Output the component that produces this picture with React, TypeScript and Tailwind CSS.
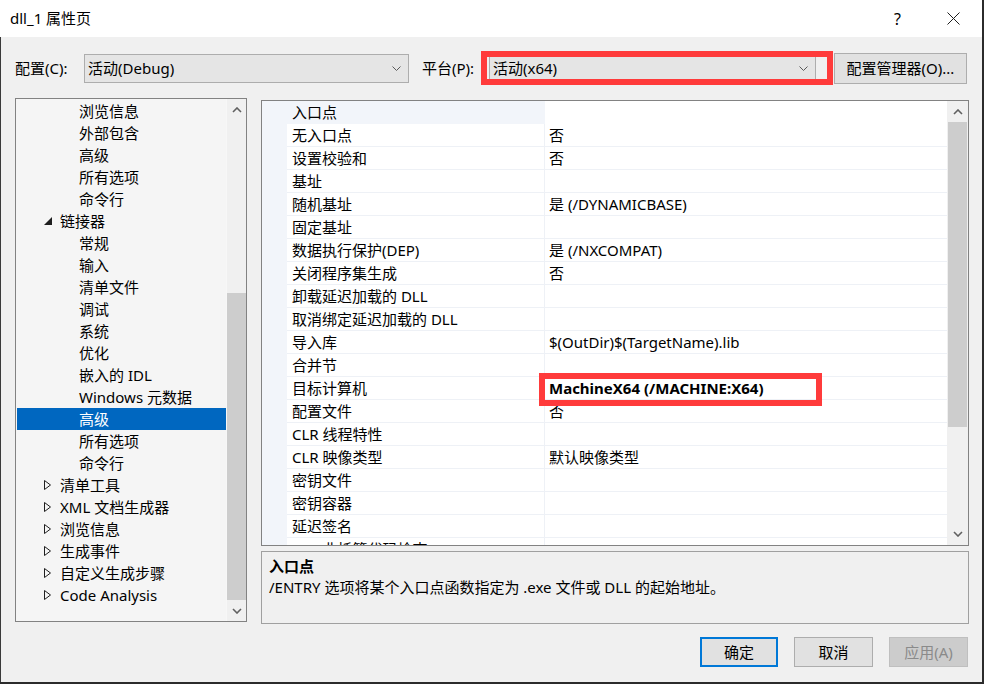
import React from 'react';

interface TreeItem {
  label: string;
  parent?: boolean;
  open?: boolean;
  selected?: boolean;
}

const treeItems: TreeItem[] = [
  { label: '浏览信息' },
  { label: '外部包含' },
  { label: '高级' },
  { label: '所有选项' },
  { label: '命令行' },
  { label: '链接器', parent: true, open: true },
  { label: '常规' },
  { label: '输入' },
  { label: '清单文件' },
  { label: '调试' },
  { label: '系统' },
  { label: '优化' },
  { label: '嵌入的 IDL' },
  { label: 'Windows 元数据' },
  { label: '高级', selected: true },
  { label: '所有选项' },
  { label: '命令行' },
  { label: '清单工具', parent: true },
  { label: 'XML 文档生成器', parent: true },
  { label: '浏览信息', parent: true },
  { label: '生成事件', parent: true },
  { label: '自定义生成步骤', parent: true },
  { label: 'Code Analysis', parent: true },
];

const properties: [string, string][] = [
  ['无入口点', '否'],
  ['设置校验和', '否'],
  ['基址', ''],
  ['随机基址', '是 (/DYNAMICBASE)'],
  ['固定基址', ''],
  ['数据执行保护(DEP)', '是 (/NXCOMPAT)'],
  ['关闭程序集生成', '否'],
  ['卸载延迟加载的 DLL', ''],
  ['取消绑定延迟加载的 DLL', ''],
  ['导入库', '$(OutDir)$(TargetName).lib'],
  ['合并节', ''],
  ['目标计算机', 'MachineX64 (/MACHINE:X64)'],
  ['配置文件', '否'],
  ['CLR 线程特性', ''],
  ['CLR 映像类型', '默认映像类型'],
  ['密钥文件', ''],
  ['密钥容器', ''],
  ['延迟签名', ''],
  ['CLR 非托管代码检查', ''],
];

const SelectChevron = () => (
  <svg width="9" height="5" viewBox="0 0 9 5" fill="none">
    <polyline points="0.5,0.5 4.5,4.5 8.5,0.5" stroke="#5a5a5a" strokeWidth="1" />
  </svg>
);

const ScrollArrow = ({ down }: { down?: boolean }) => (
  <svg width="10" height="6" viewBox="0 0 10 6" fill="none">
    <polyline
      points={down ? '1,1 5,5 9,1' : '1,5 5,1 9,5'}
      stroke="#606060"
      strokeWidth="1.6"
    />
  </svg>
);

const Expander = ({ open }: { open?: boolean }) =>
  open ? (
    <svg width="8" height="8" viewBox="0 0 8 8">
      <polygon points="8,0 8,8 0,8" fill="#1e1e1e" />
    </svg>
  ) : (
    <svg width="7" height="10" viewBox="0 0 7 10" fill="none">
      <polygon points="0.5,0.5 6.5,5 0.5,9.5" stroke="#1e1e1e" strokeWidth="1" />
    </svg>
  );

const Tree = () => (
  <div className="w-[232px] h-[524px] border border-[#828282] bg-[#f5f5f5] flex">
    <div className="flex-1 pt-[1px] pl-[1px] overflow-hidden">
      {treeItems.map((item, i) => (
        <div
          key={i}
          className={
            item.selected
              ? 'h-[22px] flex items-center bg-[#0067c0] text-white'
              : 'h-[22px] flex items-center text-black'
          }
        >
          {item.parent ? (
            <div className="flex items-center pl-[27px]">
              <div className="w-[16px] flex items-center">
                <Expander open={item.open} />
              </div>
              <span>{item.label}</span>
            </div>
          ) : (
            <span className="pl-[62px]">{item.label}</span>
          )}
        </div>
      ))}
    </div>
    <div className="w-[20px] bg-[#f0f0f0] border-l border-[#f7f7f7] flex flex-col">
      <div className="h-[22px] flex items-center justify-center">
        <ScrollArrow />
      </div>
      <div className="flex-1 flex flex-col">
        <div className="h-[172px]" />
        <div className="flex-1 bg-[#cdcdcd]" />
      </div>
      <div className="h-[21px] flex items-center justify-center">
        <ScrollArrow down />
      </div>
    </div>
  </div>
);

const Grid = () => (
  <div className="h-[446px] border border-[#828282] bg-white flex">
    <div className="flex-1 overflow-hidden">
      <div className="h-[23px] flex bg-[#f2f5fa]">
        <div className="w-[25px]" />
        <div className="w-[258px] flex items-center pl-[5px]">入口点</div>
        <div className="flex-1 bg-white" />
      </div>
      {properties.map(([name, value], i) => (
        <div key={i} className="h-[23px] flex">
          <div className="w-[25px] bg-[#f2f5fa]" />
          <div className="w-[258px] flex items-center pl-[5px] border-b border-r border-[#eef1f6] whitespace-nowrap">
            {name}
          </div>
          <div className="flex-1 relative flex items-center pl-[4px] border-b border-[#eef1f6] whitespace-nowrap">
            {name === '目标计算机' ? (
              <>
                <span className="font-bold">{value}</span>
                <div className="absolute left-[-6px] top-[-4px] w-[283px] h-[33px] border-[6px] border-[#ff3b3b] z-10" />
              </>
            ) : (
              value
            )}
          </div>
        </div>
      ))}
    </div>
    <div className="w-[21px] bg-[#f0f0f0] flex flex-col">
      <div className="h-[21px] flex items-center justify-center">
        <ScrollArrow />
      </div>
      <div className="flex-1 flex flex-col px-[1px]">
        <div className="h-[305px] bg-[#cdcdcd]" />
      </div>
      <div className="h-[22px] flex items-center justify-center">
        <ScrollArrow down />
      </div>
    </div>
  </div>
);

export default function App() {
  return (
    <div className="w-[984px] h-[684px] bg-[#f0f0f0] flex flex-col border-r-2 border-b-2 border-[#2b2b2b] text-[15px] text-black font-['Noto_Sans','Noto_Sans_CJK_SC',sans-serif] overflow-hidden">
      <div className="h-[37px] bg-white flex items-center justify-between pl-[10px] pr-[22px] shrink-0">
        <span>dll_1 属性页</span>
        <div className="flex items-center gap-[46px]">
          <span className="text-[16px]">?</span>
          <svg width="13" height="13" viewBox="0 0 13 13" fill="none">
            <line x1="0.5" y1="0.5" x2="12.5" y2="12.5" stroke="#1e1e1e" strokeWidth="1" />
            <line x1="12.5" y1="0.5" x2="0.5" y2="12.5" stroke="#1e1e1e" strokeWidth="1" />
          </svg>
        </div>
      </div>

      <div className="flex-1 flex flex-col pl-[14px] border-l border-[#3a3a3a]">
        <div className="mt-[13px] h-[36px] flex items-center">
          <span className="w-[69px]">配置(C):</span>
          <div className="w-[325px] h-[29px] bg-[#e5e5e5] border border-[#adadad] flex items-center justify-between pl-[3px] pr-[7px]">
            <span>活动(Debug)</span>
            <SelectChevron />
          </div>
          <span className="ml-[13px] w-[67px]">平台(P):</span>
          <div className="relative w-[327px] h-[29px] bg-[#e5e5e5] border border-[#adadad] flex items-center justify-between pl-[3px] pr-[7px]">
            <span>活动(x64)</span>
            <SelectChevron />
            <div className="absolute left-[-9px] top-[-4px] w-[352px] h-[34px] border-[6px] border-[#ff3b3b]" />
          </div>
          <div className="ml-[18px] w-[133px] h-[31px] bg-[#e1e1e1] border border-[#adadad] flex items-center justify-center">
            配置管理器(O)...
          </div>
        </div>

        <div className="mt-[12px] flex">
          <Tree />
          <div className="ml-[14px] w-[708px] flex flex-col">
            <div className="mt-[2px]">
              <Grid />
            </div>
            <div className="mt-[5px] h-[73px] border border-[#a0a0a0] bg-[#f0f0f0] pl-[7px] pt-[4px]">
              <div className="h-[20px] flex items-center font-bold">入口点</div>
              <div className="h-[22px] flex items-center">
                /ENTRY 选项将某个入口点函数指定为 .exe 文件或 DLL 的起始地址。
              </div>
            </div>
          </div>
        </div>

        <div className="mt-[13px] flex justify-end pr-[14px] gap-[16px]">
          <div className="w-[78px] h-[30px] bg-[#e1e1e1] border-2 border-[#0078d7] flex items-center justify-center">
            确定
          </div>
          <div className="w-[79px] h-[30px] bg-[#e1e1e1] border border-[#adadad] flex items-center justify-center">
            取消
          </div>
          <div className="w-[79px] h-[30px] bg-[#cccccc] border border-[#bfbfbf] text-[#8a8a8a] flex items-center justify-center">
            应用(A)
          </div>
        </div>
      </div>
    </div>
  );
}
